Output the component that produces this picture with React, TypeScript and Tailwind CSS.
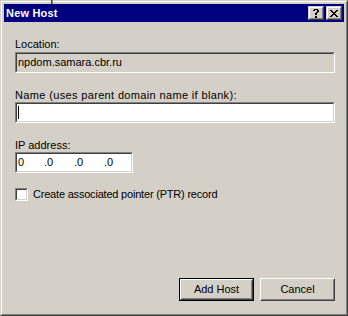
import React from "react";

const font = { fontFamily: '"Liberation Sans", Arial, sans-serif' };

function Sunken({ children, className }: { children?: React.ReactNode; className?: string }) {
  return (
    <div className={"border border-t-[#808080] border-l-[#808080] border-b-white border-r-white " + (className ?? "")}>
      <div className="h-full border border-t-[#404040] border-l-[#404040] border-b-[#d4d0c8] border-r-[#d4d0c8]">
        {children}
      </div>
    </div>
  );
}

function CloseGlyph() {
  const rows = ["11000011", "01100110", "00111100", "00011000", "00111100", "01100110", "11000011"];
  return (
    <svg width="8" height="7" viewBox="0 0 8 7" shapeRendering="crispEdges">
      {rows.flatMap((r, y) =>
        r.split("").map((c, x) => (c === "1" ? <rect key={x + "-" + y} x={x} y={y} width="1" height="1" fill="#000" /> : null))
      )}
    </svg>
  );
}

function HelpGlyph() {
  const rows = ["011110", "110011", "000011", "000110", "001100", "001100", "000000", "001100", "001100"];
  return (
    <svg width="6" height="9" viewBox="0 0 6 9" shapeRendering="crispEdges">
      {rows.flatMap((r, y) =>
        r.split("").map((c, x) => (c === "1" ? <rect key={x + "-" + y} x={x} y={y} width="1" height="1" fill="#000" /> : null))
      )}
    </svg>
  );
}

function CaptionButton({ children }: { children: React.ReactNode }) {
  return (
    <div className="w-[16px] h-[14px] border border-t-[#d4d0c8] border-l-[#d4d0c8] border-b-[#404040] border-r-[#404040]">
      <div className="h-full border border-t-white border-l-white border-b-[#808080] border-r-[#808080] bg-[#d4d0c8] flex items-center justify-center">
        {children}
      </div>
    </div>
  );
}

export default function App() {
  return (
    <div className="relative w-[348px] h-[316px] bg-[#d4d0c8] border border-t-[#d4d0c8] border-l-[#d4d0c8] border-b-[#404040] border-r-[#404040] text-[11px] text-black" style={font}>
      <div className="absolute top-[-1px] left-[50px] w-[1px] h-[4px] bg-[#404040]" />
      <div className="absolute top-[-1px] left-[51px] w-[1px] h-[4px] bg-[#808080]" />
      <div className="h-full border border-t-white border-l-white border-b-[#808080] border-r-[#808080] p-[2px] flex flex-col">
        <div className="h-[18px] bg-[#000080] flex items-center pl-[2px] pr-[2px]">
          <span className="text-white font-bold text-[11px] leading-[13px] flex-1 tracking-[0.2px]">New Host</span>
          <div className="flex items-center">
            <CaptionButton>
              <HelpGlyph />
            </CaptionButton>
            <div className="w-[2px]" />
            <CaptionButton>
              <CloseGlyph />
            </CaptionButton>
          </div>
        </div>

        <div className="flex-1 flex flex-col pl-[11px] pr-[9px] pb-[11px]">
          <div className="mt-[16px] h-[13px] leading-[13px]">Location:</div>
          <Sunken className="mt-[1px] h-[21px] bg-[#d4d0c8]">
            <div className="h-full flex items-center pl-[1px] leading-[13px]">npdom.samara.cbr.ru</div>
          </Sunken>

          <div className="mt-[16px] h-[13px] leading-[13px] tracking-[0.35px]">Name (uses parent domain name if blank):</div>
          <Sunken className="mt-[0px] h-[21px] bg-white">
            <div className="h-full flex items-center pl-[1px]">
              <div className="w-[1px] h-[13px] bg-black" />
            </div>
          </Sunken>

          <div className="mt-[16px] h-[13px] leading-[13px]">IP address:</div>
          <Sunken className="mt-[0px] h-[21px] w-[118px] bg-white">
            <div className="h-full flex items-center pl-[1px] leading-[13px]">
              <span className="w-[26px]">0</span>
              <span className="w-[30px]">.0</span>
              <span className="w-[30px]">.0</span>
              <span>.0</span>
            </div>
          </Sunken>

          <div className="mt-[15px] flex items-center h-[13px]">
            <Sunken className="w-[13px] h-[13px] bg-white" />
            <span className="ml-[5px] leading-[13px] tracking-[-0.2px]">Create associated pointer (PTR) record</span>
          </div>

          <div className="mt-auto flex justify-end gap-[6px]">
            <div className="w-[75px] h-[23px] border border-black">
              <div className="h-full border border-t-white border-l-white border-b-[#404040] border-r-[#404040]">
                <div className="h-full border border-t-[#d4d0c8] border-l-[#d4d0c8] border-b-[#808080] border-r-[#808080] flex items-center justify-center leading-[13px]">
                  Add Host
                </div>
              </div>
            </div>
            <div className="w-[75px] h-[23px] border border-t-white border-l-white border-b-[#404040] border-r-[#404040]">
              <div className="h-full border border-t-[#d4d0c8] border-l-[#d4d0c8] border-b-[#808080] border-r-[#808080] flex items-center justify-center leading-[13px]">
                Cancel
              </div>
            </div>
          </div>
        </div>
      </div>
    </div>
  );
}
